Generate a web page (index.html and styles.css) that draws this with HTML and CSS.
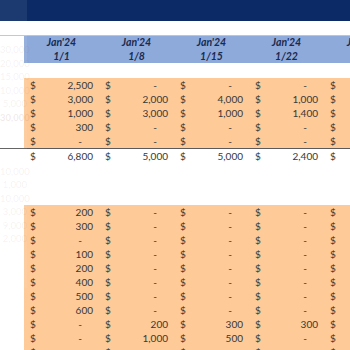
FILE: index.html
```html
<!DOCTYPE html>
<html>
<head>
<meta charset="utf-8">
<link rel="stylesheet" href="styles.css">
</head>
<body>
<div class="sheet">
  <div class="title"></div>
  <div class="gap g14"></div>
  <div class="head">
    <div class="hrow">
      <div class="lbl"></div>
      <div class="h">Jan'24</div><div class="h">Jan'24</div><div class="h">Jan'24</div><div class="h">Jan'24</div><div class="h">Jan'24</div>
    </div>
    <div class="hrow">
      <div class="lbl"></div>
      <div class="h">1/1</div><div class="h">1/8</div><div class="h">1/15</div><div class="h">1/22</div><div class="h">1/29</div>
    </div>
  </div>
  <div class="gap g15"></div>

  <div class="row or">
    <div class="lbl"></div>
    <div class="c"><span>$</span><span>2,500</span></div>
    <div class="c"><span>$</span><span class="z">-</span></div>
    <div class="c"><span>$</span><span class="z">-</span></div>
    <div class="c"><span>$</span><span class="z">-</span></div>
    <div class="c"><span>$</span><span class="z">-</span></div>
  </div>
  <div class="row or">
    <div class="lbl"></div>
    <div class="c"><span>$</span><span>3,000</span></div>
    <div class="c"><span>$</span><span>2,000</span></div>
    <div class="c"><span>$</span><span>4,000</span></div>
    <div class="c"><span>$</span><span>1,000</span></div>
    <div class="c"><span>$</span><span>1,000</span></div>
  </div>
  <div class="row or">
    <div class="lbl"></div>
    <div class="c"><span>$</span><span>1,000</span></div>
    <div class="c"><span>$</span><span>3,000</span></div>
    <div class="c"><span>$</span><span>1,000</span></div>
    <div class="c"><span>$</span><span>1,400</span></div>
    <div class="c"><span>$</span><span>1,000</span></div>
  </div>
  <div class="row or">
    <div class="lbl"></div>
    <div class="c"><span>$</span><span>300</span></div>
    <div class="c"><span>$</span><span class="z">-</span></div>
    <div class="c"><span>$</span><span class="z">-</span></div>
    <div class="c"><span>$</span><span class="z">-</span></div>
    <div class="c"><span>$</span><span class="z">-</span></div>
  </div>
  <div class="row or">
    <div class="lbl"></div>
    <div class="c"><span>$</span><span class="z">-</span></div>
    <div class="c"><span>$</span><span class="z">-</span></div>
    <div class="c"><span>$</span><span class="z">-</span></div>
    <div class="c"><span>$</span><span class="z">-</span></div>
    <div class="c"><span>$</span><span class="z">-</span></div>
  </div>
  <div class="row total">
    <div class="lbl"></div>
    <div class="c"><span>$</span><span>6,800</span></div>
    <div class="c"><span>$</span><span>5,000</span></div>
    <div class="c"><span>$</span><span>5,000</span></div>
    <div class="c"><span>$</span><span>2,400</span></div>
    <div class="c"><span>$</span><span>2,000</span></div>
  </div>
  <div class="gap g42"></div>

  <div class="row or">
    <div class="lbl"></div>
    <div class="c"><span>$</span><span>200</span></div>
    <div class="c"><span>$</span><span class="z">-</span></div>
    <div class="c"><span>$</span><span class="z">-</span></div>
    <div class="c"><span>$</span><span class="z">-</span></div>
    <div class="c"><span>$</span><span class="z">-</span></div>
  </div>
  <div class="row or">
    <div class="lbl"></div>
    <div class="c"><span>$</span><span>300</span></div>
    <div class="c"><span>$</span><span class="z">-</span></div>
    <div class="c"><span>$</span><span class="z">-</span></div>
    <div class="c"><span>$</span><span class="z">-</span></div>
    <div class="c"><span>$</span><span class="z">-</span></div>
  </div>
  <div class="row or">
    <div class="lbl"></div>
    <div class="c"><span>$</span><span class="z">-</span></div>
    <div class="c"><span>$</span><span class="z">-</span></div>
    <div class="c"><span>$</span><span class="z">-</span></div>
    <div class="c"><span>$</span><span class="z">-</span></div>
    <div class="c"><span>$</span><span class="z">-</span></div>
  </div>
  <div class="row or">
    <div class="lbl"></div>
    <div class="c"><span>$</span><span>100</span></div>
    <div class="c"><span>$</span><span class="z">-</span></div>
    <div class="c"><span>$</span><span class="z">-</span></div>
    <div class="c"><span>$</span><span class="z">-</span></div>
    <div class="c"><span>$</span><span class="z">-</span></div>
  </div>
  <div class="row or">
    <div class="lbl"></div>
    <div class="c"><span>$</span><span>200</span></div>
    <div class="c"><span>$</span><span class="z">-</span></div>
    <div class="c"><span>$</span><span class="z">-</span></div>
    <div class="c"><span>$</span><span class="z">-</span></div>
    <div class="c"><span>$</span><span class="z">-</span></div>
  </div>
  <div class="row or">
    <div class="lbl"></div>
    <div class="c"><span>$</span><span>400</span></div>
    <div class="c"><span>$</span><span class="z">-</span></div>
    <div class="c"><span>$</span><span class="z">-</span></div>
    <div class="c"><span>$</span><span class="z">-</span></div>
    <div class="c"><span>$</span><span class="z">-</span></div>
  </div>
  <div class="row or">
    <div class="lbl"></div>
    <div class="c"><span>$</span><span>500</span></div>
    <div class="c"><span>$</span><span class="z">-</span></div>
    <div class="c"><span>$</span><span class="z">-</span></div>
    <div class="c"><span>$</span><span class="z">-</span></div>
    <div class="c"><span>$</span><span class="z">-</span></div>
  </div>
  <div class="row or">
    <div class="lbl"></div>
    <div class="c"><span>$</span><span>600</span></div>
    <div class="c"><span>$</span><span class="z">-</span></div>
    <div class="c"><span>$</span><span class="z">-</span></div>
    <div class="c"><span>$</span><span class="z">-</span></div>
    <div class="c"><span>$</span><span class="z">-</span></div>
  </div>
  <div class="row or">
    <div class="lbl"></div>
    <div class="c"><span>$</span><span class="z">-</span></div>
    <div class="c"><span>$</span><span>200</span></div>
    <div class="c"><span>$</span><span>300</span></div>
    <div class="c"><span>$</span><span>300</span></div>
    <div class="c"><span>$</span><span>300</span></div>
  </div>
  <div class="row or">
    <div class="lbl"></div>
    <div class="c"><span>$</span><span class="z">-</span></div>
    <div class="c"><span>$</span><span>1,000</span></div>
    <div class="c"><span>$</span><span>500</span></div>
    <div class="c"><span>$</span><span class="z">-</span></div>
    <div class="c"><span>$</span><span>500</span></div>
  </div>
  <div class="row or">
    <div class="lbl"></div>
    <div class="c"><span>$</span><span class="z">-</span></div>
    <div class="c"><span>$</span><span class="z">-</span></div>
    <div class="c"><span>$</span><span class="z">-</span></div>
    <div class="c"><span>$</span><span class="z">-</span></div>
    <div class="c"><span>$</span><span class="z">-</span></div>
  </div>

  <div class="ghost">
    <div class="gl">30,000</div>
    <div class="gl">20,000</div>
    <div class="gl">15,000</div>
    <div class="gl">10,000</div>
    <div class="gl">5,000</div>
    <div class="gl gb">30,000</div>
    <div class="gl"></div>
    <div class="gl"></div>
    <div class="gl"></div>
    <div class="gl">10,000</div>
    <div class="gl">1,000</div>
    <div class="gl">10,000</div>
    <div class="gl">3,000</div>
    <div class="gl">9,000</div>
    <div class="gl">2,000</div>
  </div>
</div>
</body>
</html>
```

FILE: styles.css
```css
html, body {
  margin: 0;
  padding: 0;
  background: #ffffff;
}
body {
  width: 350px;
  height: 350px;
  overflow: hidden;
  font-family: Lato, "Liberation Sans", sans-serif;
  font-size: 10px;
  color: #383838;
}
.sheet {
  position: relative;
  width: 420px;
}
.title {
  height: 21px;
  background: #0b2a66;
}
.gap { background: #ffffff; }
.g14 { height: 14px; }
.g15 { height: 15px; }
.g42 { height: 42px; }

.head {
  border-top: 1px solid #c4c4c4;
}
.hrow {
  display: flex;
  height: 13.5px;
}
.lbl {
  width: 24px;
  flex: none;
  background: #ffffff;
}
.h {
  width: 75px;
  flex: none;
  background: #8eaadb;
  color: #1a2b50;
  font-weight: bold;
  font-style: italic;
  font-size: 10.5px;
  text-align: center;
  line-height: 13.5px;
}
.row {
  display: flex;
  height: 14px;
  line-height: 14px;
}
.c {
  width: 75px;
  flex: none;
  display: flex;
  justify-content: space-between;
  padding: 0 6px 0 6px;
  box-sizing: border-box;
}
.or .c { background: #fdca98; }
.z {
  padding-right: 11px;
}
.total {
  border-top: 1px solid #5a5a5a;
  background: #ffffff;
}
.ghost {
  position: absolute;
  left: 0;
  top: 0;
  width: 27px;
  height: 288px;
  background: rgba(255, 255, 255, 0.07);
  padding-top: 43px;
  box-sizing: border-box;
  text-align: right;
  color: rgba(150, 100, 80, 0.09);
  font-size: 9.5px;
}
.gl {
  height: 13.5px;
  line-height: 13.5px;
}
.gb { font-weight: bold; color: rgba(150, 90, 70, 0.13); }
```
